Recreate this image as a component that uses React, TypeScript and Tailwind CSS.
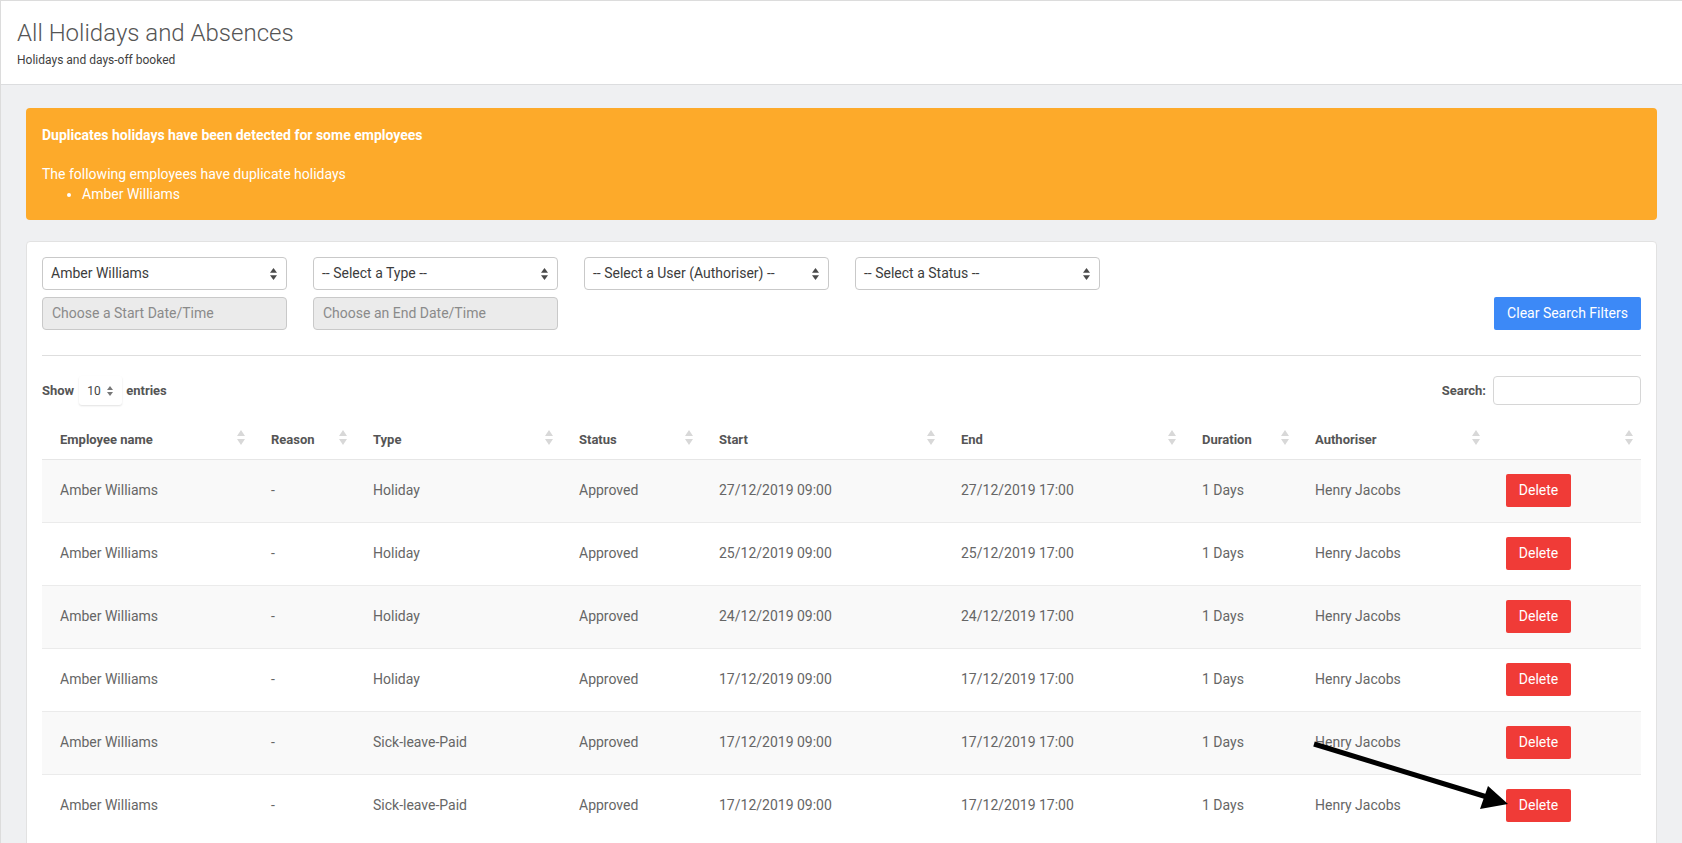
import React from "react";

const SortIcon = () => (
  <svg width="8" height="15" viewBox="0 0 8 15" className="shrink-0 -mt-[4px]">
    <path d="M4 0 L8 6 L0 6 Z" fill="#d8d8d8" />
    <path d="M4 15 L8 9 L0 9 Z" fill="#d8d8d8" />
  </svg>
);

const SelectArrow = () => (
  <svg width="7" height="12" viewBox="0 0 7 12" className="shrink-0">
    <path d="M3.5 0 L7 4.8 L0 4.8 Z" fill="#4a4a4a" />
    <path d="M3.5 12 L7 7.2 L0 7.2 Z" fill="#4a4a4a" />
  </svg>
);

const FakeSelect = ({ label }: { label: string }) => (
  <div className="w-[245px] h-[33px] border border-[#c9c9c9] rounded-[4px] bg-white flex items-center justify-between pl-[8px] pr-[9px] text-[14px] text-[#3c3c3c]">
    <span>{label}</span>
    <SelectArrow />
  </div>
);

const DateInput = ({ label }: { label: string }) => (
  <div className="w-[245px] h-[33px] border border-[#c9c9c9] rounded-[4px] bg-[#ebebeb] flex items-center pl-[9px] text-[14px] text-[#8a8a8a]">
    {label}
  </div>
);

const rows = [
  { type: "Holiday", start: "27/12/2019 09:00", end: "27/12/2019 17:00" },
  { type: "Holiday", start: "25/12/2019 09:00", end: "25/12/2019 17:00" },
  { type: "Holiday", start: "24/12/2019 09:00", end: "24/12/2019 17:00" },
  { type: "Holiday", start: "17/12/2019 09:00", end: "17/12/2019 17:00" },
  { type: "Sick-leave-Paid", start: "17/12/2019 09:00", end: "17/12/2019 17:00" },
  { type: "Sick-leave-Paid", start: "17/12/2019 09:00", end: "17/12/2019 17:00" },
];

const headers = ["Employee name", "Reason", "Type", "Status", "Start", "End", "Duration", "Authoriser", ""];
const widths = [211, 102, 206, 140, 242, 241, 113, 191, 153];

export default function App() {
  return (
    <div className="relative w-[1682px] h-[843px] overflow-hidden bg-[#eff0f2] border-t border-l border-[#dcdcdc] font-[Roboto,Arial,sans-serif]">
      <header className="bg-white h-[84px] border-b border-[#dcdddf] pl-[16px] pt-[16px]">
        <h1 className="text-[24px] leading-[32px] font-light text-[#555]">All Holidays and Absences</h1>
        <p className="text-[12px] leading-[16px] text-[#3f3f3f] mt-[3px]">Holidays and days-off booked</p>
      </header>

      <main className="px-[25px] pt-[23px]">
        <div className="h-[112px] rounded-[4px] bg-[#fdaa2a] text-white text-[14px] leading-[20px] pl-[16px] pt-[17px]">
          <p className="font-bold">Duplicates holidays have been detected for some employees</p>
          <p className="mt-[19px]">The following employees have duplicate holidays</p>
          <ul className="list-disc pl-[40px]">
            <li>Amber Williams</li>
          </ul>
        </div>

        <div className="mt-[21px] bg-white border border-[#e2e2e2] rounded-[4px] px-[15px] pt-[15px] h-[700px]">
          <div className="flex gap-[26px]">
            <FakeSelect label="Amber Williams" />
            <FakeSelect label="-- Select a Type --" />
            <FakeSelect label="-- Select a User (Authoriser) --" />
            <FakeSelect label="-- Select a Status --" />
          </div>
          <div className="flex gap-[26px] mt-[7px] items-center">
            <DateInput label="Choose a Start Date/Time" />
            <DateInput label="Choose an End Date/Time" />
            <div className="flex-1" />
            <button className="h-[33px] w-[147px] bg-[#3c89f7] text-white text-[14px] rounded-[2px]">
              Clear Search Filters
            </button>
          </div>

          <div className="mt-[25px] border-t border-[#dedede]" />

          <div className="mt-[20px] flex items-center justify-between h-[29px]">
            <div className="flex items-center text-[13px] font-bold text-[#555]">
              <span>Show</span>
              <div className="ml-[5px] w-[43px] h-[29px] rounded-[3px] shadow-[0_1px_2px_rgba(0,0,0,0.12)] flex items-center justify-between pl-[8px] pr-[9px] font-normal text-[12px] text-[#444]">
                <span>10</span>
                <svg width="6" height="10" viewBox="0 0 6 10">
                  <path d="M3 0 L6 4 L0 4 Z" fill="#777" />
                  <path d="M3 10 L6 6 L0 6 Z" fill="#777" />
                </svg>
              </div>
              <span className="ml-[4px]">entries</span>
            </div>
            <div className="flex items-center text-[13px] font-bold text-[#555]">
              <span>Search:</span>
              <div className="ml-[7px] w-[148px] h-[29px] border border-[#d6d6d6] rounded-[4px] bg-white" />
            </div>
          </div>

          <table className="mt-[16px] w-[1599px] table-fixed border-collapse">
            <colgroup>
              {widths.map((w, i) => (
                <col key={i} style={{ width: w }} />
              ))}
            </colgroup>
            <thead>
              <tr className="h-[38px] border-b border-[#e6e6e6]">
                {headers.map((h, i) => (
                  <th key={i} className="pl-[18px] pr-[8px] text-left text-[13px] font-bold text-[#555]">
                    <div className="flex items-center justify-between">
                      <span>{h}</span>
                      <SortIcon />
                    </div>
                  </th>
                ))}
              </tr>
            </thead>
            <tbody className="text-[14px] text-[#666]">
              {rows.map((r, i) => (
                <tr key={i} className={`h-[63px] border-t border-[#ebebeb] ${i % 2 === 0 ? "bg-[#f9f9f9]" : "bg-white"}`}>
                  <td className="pl-[18px]">Amber Williams</td>
                  <td className="pl-[18px]">-</td>
                  <td className="pl-[18px]">{r.type}</td>
                  <td className="pl-[18px]">Approved</td>
                  <td className="pl-[18px]">{r.start}</td>
                  <td className="pl-[18px]">{r.end}</td>
                  <td className="pl-[18px]">1 Days</td>
                  <td className="pl-[18px]">Henry Jacobs</td>
                  <td className="pl-[18px]">
                    <button className="h-[33px] w-[65px] bg-[#f03b37] text-white text-[14px] rounded-[2px]">Delete</button>
                  </td>
                </tr>
              ))}
            </tbody>
          </table>
        </div>
      </main>

      <svg className="absolute left-0 top-0 pointer-events-none" width="1682" height="843" viewBox="0 0 1682 843">
        <line x1="1313" y1="743" x2="1486" y2="796" stroke="#000" strokeWidth="5" />
        <polygon points="1507,803 1479,808 1487,785" fill="#000" />
      </svg>
    </div>
  );
}
